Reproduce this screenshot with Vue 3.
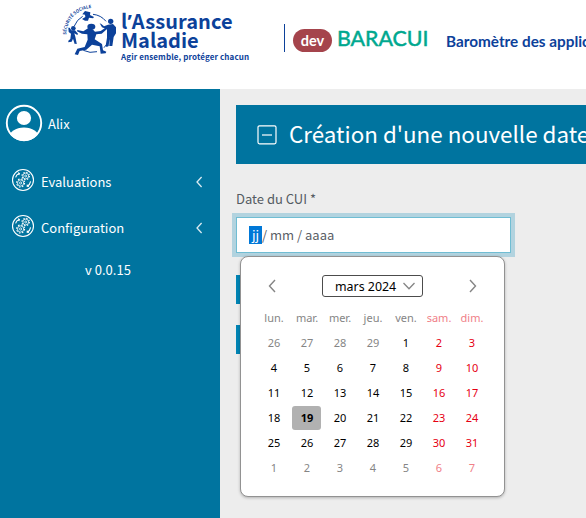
<script setup>
const weekdays = ['lun.', 'mar.', 'mer.', 'jeu.', 'ven.', 'sam.', 'dim.']
const menu = ['Evaluations', 'Configuration']
const days = [
  ...[26, 27, 28, 29].map((n) => ({ n, out: true })),
  ...Array.from({ length: 31 }, (_, i) => ({ n: i + 1, out: false })),
  ...[1, 2, 3, 4, 5, 6, 7].map((n) => ({ n, out: true })),
]
</script>

<template>
  <div class="page">
    <header class="header">
      <svg class="emblem" viewBox="0 0 180 180">
        <defs><path id="arc" d="M19 98 A79 79 0 0 1 101 18" /></defs>
        <text class="arc-text"><textPath href="#arc" textLength="121">SÉCURITÉ SOCIALE</textPath></text>
        <path class="ring" d="M43 72 A57 57 0 0 1 68 43 M99 37 A57 57 0 0 1 138 58 M149 108 A57 57 0 0 1 132 137 M111 149 A57 57 0 0 1 70 145 M49 126 A57 57 0 0 1 43 114" />
        <g class="figures">
          <path d="M67 37 L75 27 L91 31 L90 39 L102 45 L99 49 L87 47 L84 56 L75 56 L66 51 L76 45 L75 38Z" />
          <ellipse cx="94" cy="74" rx="12" ry="9" />
          <path d="M84 79 L98 82 L105 89 L122 87 L145 71 L148 75 L125 95 L109 97 L104 112 L126 126 L129 145 L139 149 L137 154 L122 155 L119 133 L96 128 L79 143 L59 147 L54 159 L44 157 L52 140 L74 135 L83 113 L82 97 L66 95 L51 88 L52 84 L70 88Z" />
          <circle cx="40" cy="79" r="7" />
          <path d="M34 85 L45 85 L54 95 L52 99 L43 94 L46 104 L50 124 L44 126 L39 110 L35 119 L25 121 L25 116 L31 111 L33 95 L26 90 L25 77 L29 77Z" />
          <circle cx="152" cy="58" r="8" />
          <path d="M144 68 L159 66 L168 76 L168 94 L161 105 L157 132 L148 132 L149 105 L146 132 L140 135 L137 131 L141 107 L141 82 L126 76 L119 64 L124 66 L132 73Z" />
        </g>
      </svg>
      <div class="brand">
        <span class="brand-one">l<span class="apos">’</span>Assurance</span>
        <span class="brand-two">Maladie</span>
        <span class="brand-tag">Agir ensemble, protéger chacun</span>
      </div>
      <span class="rule"></span>
      <span class="env">dev</span>
      <span class="app-name">BARACUI</span>
      <span class="app-desc">Baromètre des applications</span>
    </header>

    <div class="body">
      <aside class="sidebar">
        <div class="user">
          <svg class="avatar" viewBox="0 0 38 38">
            <defs><clipPath id="disc"><circle cx="19" cy="19" r="18" /></clipPath></defs>
            <circle class="avatar-ring" cx="19" cy="19" r="17.2" />
            <circle class="avatar-fill" cx="19" cy="14" r="7.1" />
            <ellipse class="avatar-fill" clip-path="url(#disc)" cx="19" cy="34" rx="15" ry="10.5" />
          </svg>
          <span class="user-name">Alix</span>
        </div>
        <nav class="menu">
          <div v-for="m in menu" :key="m" class="item">
            <svg class="gears" viewBox="0 0 24 24">
              <circle cx="12" cy="12" r="10.5" />
              <circle class="cog" cx="14.7" cy="8" r="1" />
              <circle class="cog" cx="14.7" cy="8" r="2.9" />
              <circle class="teeth" cx="14.7" cy="8" r="3.7" />
              <circle class="cog" cx="9.6" cy="15" r="1.1" />
              <circle class="cog" cx="9.6" cy="15" r="3.1" />
              <circle class="teeth big" cx="9.6" cy="15" r="4" />
              <path d="M4.6 9.4 Q5.4 6.6 8.4 5.6 M7 4.8 L8.4 5.6 L7.8 7 M19.6 13.4 Q19 17 16.2 18.3 M16.3 16.6 L16.2 18.3 L17.9 18.4" />
            </svg>
            <span class="item-label">{{ m }}</span>
            <svg class="chev" viewBox="0 0 8 12"><path d="M6.6 1 L2 6 L6.6 11" /></svg>
          </div>
        </nav>
        <div class="version">v 0.0.15</div>
      </aside>

      <main class="main">
        <h1 class="title">
          <svg class="minus" viewBox="0 0 20 20"><rect x="1" y=".8" width="18" height="18" rx="1.5" /><path d="M5 10 H15" /></svg>
          <span class="title-text">Création d'une nouvelle date de CUI</span>
        </h1>
        <div class="label">Date du CUI *</div>
        <div class="field">
          <div class="input"><span class="sel">jj</span><span class="rest">/ mm / aaaa</span></div>
          <div class="picker">
            <div class="picker-head">
              <svg class="nav" viewBox="0 0 8 14"><path d="M7 1 L1.5 7 L7 13" /></svg>
              <div class="month">
                <span>mars 2024</span>
                <svg class="down" viewBox="0 0 12 8"><path d="M.5 1 L6 6.8 L11.5 1" /></svg>
              </div>
              <svg class="nav" viewBox="0 0 8 14"><path d="M1 1 L6.5 7 L1 13" /></svg>
            </div>
            <div class="grid">
              <span v-for="(w, i) in weekdays" :key="w" class="cell head" :class="{ weekend: i > 4 }">{{ w }}</span>
              <span
                v-for="(d, i) in days"
                :key="i"
                class="cell"
                :class="{ weekend: i % 7 > 4, out: d.out, today: !d.out && d.n === 19 }"
              >{{ d.n }}</span>
            </div>
          </div>
        </div>
        <div class="btn first"></div>
        <div class="btn"></div>
      </main>
    </div>
  </div>
</template>

<style>
html, body { margin: 0; overflow: hidden; }
</style>

<style scoped>
.page {
  width: 586px;
  height: 518px;
  overflow: hidden;
  display: flex;
  flex-direction: column;
  background: #ededed;
  font-family: "Noto Sans CJK SC", "Noto Sans", sans-serif;
  font-size: 13px;
}
.header {
  box-sizing: border-box;
  height: 89px;
  flex: none;
  display: flex;
  align-items: flex-start;
  padding-left: 60px;
  background: #fff;
  color: #0c419a;
  white-space: nowrap;
}
.emblem { width: 60px; height: 60px; margin-top: 2px; flex: none; }
.arc-text { font-size: 13px; font-weight: 700; fill: #0c419a; }
.ring { fill: none; stroke: #0c419a; stroke-width: 3; }
.figures { fill: #0c419a; }
.brand { width: 164px; flex: none; display: flex; flex-direction: column; padding: 11px 0 0 1px; font-weight: 700; }
.brand-one, .brand-two { height: 19px; font-size: 20px; line-height: 19px; }
.brand-one { letter-spacing: 0.1px; }
.apos { font-family: "Noto Sans", sans-serif; line-height: 0; }
.brand-tag { margin-top: 3px; font-size: 8px; line-height: 10px; letter-spacing: 0.12px; }
.rule { width: 1px; height: 28px; margin: 24px 8px 0 -1px; background: #0c419a; flex: none; }
.env {
  width: 39px;
  height: 23px;
  margin-top: 29px;
  flex: none;
  border-radius: 12px;
  background: #a5444c;
  color: #fff;
  font: 700 14.5px/23px Lato, sans-serif;
  text-align: center;
}
.app-name { width: 109px; margin: 23px 0 0 5px; flex: none; color: #00a88f; font: 400 21.4px/30px Lato, sans-serif; -webkit-text-stroke: 0.5px #00a88f; }
.app-desc { margin-top: 31px; font: 700 15.3px/20px Lato, sans-serif; }

.body { flex: 1; display: flex; min-height: 0; }
.sidebar { width: 220px; flex: none; background: #00749f; color: #fff; }
.user { display: flex; align-items: center; height: 38px; padding: 15px 0 0 5px; }
.avatar { width: 38px; height: 38px; }
.avatar-ring { fill: none; stroke: #fff; stroke-width: 1.9; }
.avatar-fill { fill: #fff; }
.user-name { margin-left: 5px; padding-top: 2px; line-height: 20px; }
.menu { padding-top: 16px; }
.item { display: flex; align-items: center; height: 46px; padding: 0 17px 0 11px; }
.gears { width: 24px; height: 24px; margin-top: -3px; fill: none; stroke: #fff; stroke-width: 1.1; }
.cog { stroke-width: 0.8; }
.teeth { stroke-width: 1.1; stroke-dasharray: 1.45 1.456; }
.teeth.big { stroke-dasharray: 1.57 1.571; }
.item-label { flex: 1; margin-left: 6px; padding-top: 2px; line-height: 20px; }
.chev { width: 8px; height: 12px; margin-top: 1px; fill: none; stroke: #d9eaf1; stroke-width: 1.3; }
.version { padding-top: 10px; margin-left: -4px; line-height: 20px; text-align: center; }

.main { flex: 1; min-width: 0; padding: 16px 0 0 16px; }
.title {
  display: flex;
  align-items: center;
  height: 59px;
  margin: 0;
  padding-left: 20.5px;
  overflow: hidden;
  white-space: nowrap;
  background: #00749f;
  color: #fff;
  font-size: 22.4px;
  font-weight: 400;
}
.minus { width: 20px; height: 20px; flex: none; fill: none; stroke: #fff; stroke-width: 1.2; }
.title-text { margin-left: 12.5px; padding-bottom: 3px; line-height: 34px; }
.label { margin-top: 25px; line-height: 20px; color: #545b62; }
.field { position: relative; margin-top: 8px; }
.input {
  box-sizing: border-box;
  display: flex;
  align-items: center;
  width: 275px;
  height: 36px;
  padding-left: 12px;
  border: 1px solid #70bdd3;
  background: #fff;
  box-shadow: 0 0 0 4px #b2d3df;
  color: #5b6066;
  line-height: 18px;
}
.sel { width: 13px; background: #0078d7; color: #fff; text-align: center; }
.rest { margin-left: 0; }
.picker {
  position: absolute;
  left: 4px;
  top: 39px;
  z-index: 2;
  box-sizing: border-box;
  width: 265px;
  height: 241px;
  padding: 18px 16px 0;
  border: 1px solid #929292;
  border-radius: 8px;
  background: #fff;
  box-shadow: 0 1px 3px rgba(0, 0, 0, 0.25);
  font-family: "Noto Sans", sans-serif;
}
.picker-head { display: flex; align-items: center; justify-content: space-between; height: 22px; padding: 0 11px; }
.nav { width: 8px; height: 14px; fill: none; stroke: #858585; stroke-width: 1.4; }
.month {
  box-sizing: border-box;
  display: flex;
  align-items: center;
  justify-content: space-between;
  width: 101px;
  height: 22px;
  padding: 0 7px 0 12px;
  border: 1px solid #4c4c4c;
  border-radius: 3px;
  color: #000;
  font-size: 12.4px;
}
.down { width: 12px; height: 8px; fill: none; stroke: #858585; stroke-width: 1.3; }
.grid { display: grid; grid-template-columns: repeat(7, 33px); grid-auto-rows: 25px; margin-top: 9px; }
.cell {
  display: flex;
  align-items: center;
  justify-content: center;
  margin: 1px 2px;
  padding: 0 0 2px 1px;
  border-radius: 3px;
  color: #000;
  font-size: 11px;
}
.weekend { color: #e60012; }
.head, .out { color: #858585; }
.head.weekend, .out.weekend { color: #f08088; }
.today { margin-top: 0; padding-bottom: 1px; background: #b1b1b1; font-weight: 700; }
.btn { width: 120px; height: 29px; margin-top: 21px; background: #0084b4; }
.first { margin-top: 22px; }
</style>
